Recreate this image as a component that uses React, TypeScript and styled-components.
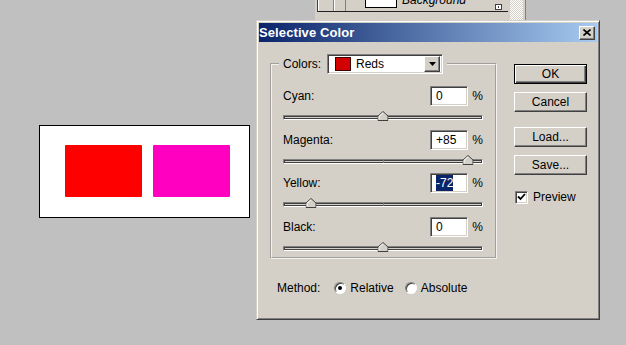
import React from "react";
import styled, { createGlobalStyle } from "styled-components";

const GlobalStyle = createGlobalStyle`
  * {
    margin: 0;
    padding: 0;
    box-sizing: border-box;
  }

  body {
    background: #c0c0c0;
    font-family: "Liberation Sans", Arial, sans-serif;
    font-size: 12px;
    color: #000;
    overflow: hidden;
  }
`;

const Desktop = styled.div`
  position: relative;
  width: 626px;
  height: 345px;
  overflow: hidden;
`;

/* ---------- layers palette peeking from the top ---------- */

const LayersPanel = styled.div`
  position: absolute;
  left: 315px;
  top: -14px;
  width: 211px;
  height: 35px;
  background: #d4d0c8;
  border-right: 1px solid #808080;
  display: flex;
  align-items: flex-start;
  padding-left: 2px;
`;

const LayerList = styled.div`
  width: 191px;
  height: 26px;
  border-left: 1px solid #404040;
  border-bottom: 1px solid #202020;
  display: flex;
  align-items: stretch;
`;

const LayerCell = styled.div<{ $w: number }>`
  width: ${(p) => p.$w}px;
  border-right: 1px solid #808080;
  box-shadow: inset 1px 0 0 #fff;
  display: flex;
  align-items: flex-end;
  justify-content: center;
  padding-bottom: 15px;
`;

const LayerThumb = styled.div`
  width: 32px;
  height: 22px;
  margin-left: 19px;
  background: #fff;
  border: 1px solid #000;
`;

const LayerName = styled.span`
  margin-left: 5px;
  font-style: italic;
  font-size: 12px;
  line-height: 1;
  padding-top: 8px;
`;

const LayerLock = styled.div`
  margin-left: auto;
  margin-right: 6px;
  padding-top: 13px;
`;

const ScrollTrack = styled.div`
  margin-left: 2px;
  width: 13px;
  height: 35px;
  background: repeating-conic-gradient(#ffffff 0 25%, #d4d0c8 0 50%) 0 0 / 2px 2px;
`;

/* ---------- document window ---------- */

const DocCanvas = styled.div`
  position: absolute;
  left: 39px;
  top: 125px;
  width: 211px;
  height: 93px;
  background: #fff;
  border: 1px solid #000;
  display: flex;
  gap: 11px;
  padding: 19px 0 0 25px;
`;

const Swatch = styled.div<{ $color: string }>`
  width: 77px;
  height: 52px;
  background: ${(p) => p.$color};
  border-radius: 1px;
`;

/* ---------- dialog ---------- */

const Dialog = styled.div`
  position: absolute;
  left: 256px;
  top: 20px;
  width: 344px;
  height: 300px;
  background: #d4d0c8;
  border: 1px solid;
  border-color: #d4d0c8 #404040 #404040 #d4d0c8;
  box-shadow: inset 1px 1px 0 #fff, inset -1px -1px 0 #808080;
  padding: 2px;
  display: flex;
  flex-direction: column;
`;

const TitleBar = styled.div`
  height: 19px;
  background: linear-gradient(to right, #0a246a, #a6caf0);
  display: flex;
  align-items: center;
  justify-content: space-between;
  padding: 0 2px 0 0;
`;

const Title = styled.span`
  color: #fff;
  font-weight: bold;
  font-size: 13px;
  letter-spacing: 0.1px;
`;

const Raised = styled.div`
  background: #d4d0c8;
  border: 1px solid;
  border-color: #fff #404040 #404040 #fff;
  box-shadow: inset -1px -1px 0 #808080;
`;

const CloseButton = styled(Raised)`
  width: 16px;
  height: 14px;
  display: flex;
  align-items: center;
  justify-content: center;
`;

const DialogBody = styled.div`
  display: flex;
  padding: 12px 0 0 11px;
`;

const LeftColumn = styled.div`
  width: 227px;
  display: flex;
  flex-direction: column;
`;

const Group = styled.fieldset`
  border: 2px groove #f4f2ee;
  padding: 12px 12px 1px 11px;
  display: flex;
  flex-direction: column;
  gap: 4.67px;
`;

const Legend = styled.legend`
  margin-left: -4px;
  padding: 0 4px;
`;

const LegendInner = styled.div`
  display: flex;
  align-items: center;
  gap: 6px;
  height: 20px;
`;

const Sunken = styled.div`
  background: #fff;
  border: 1px solid;
  border-color: #808080 #fff #fff #808080;
  box-shadow: inset 1px 1px 0 #404040, inset -1px -1px 0 #d4d0c8;
`;

const Select = styled(Sunken)`
  width: 116px;
  height: 20px;
  display: flex;
  align-items: center;
  padding: 0 2px 0 7px;
`;

const ColorChip = styled.div`
  width: 16px;
  height: 14px;
  background: #d20000;
  border: 1px solid #3a0000;
`;

const SelectText = styled.span`
  margin-left: 5px;
  flex: 1;
`;

const ArrowButton = styled(Raised)`
  width: 16px;
  height: 16px;
  display: flex;
  align-items: center;
  justify-content: center;
`;

const Block = styled.div`
  display: flex;
  flex-direction: column;
`;

const Row = styled.div`
  display: flex;
  align-items: center;
  height: 20px;
`;

const FieldLabel = styled.span`
  flex: 1;
`;

const ValueBox = styled(Sunken)`
  width: 38px;
  height: 20px;
  display: flex;
  align-items: center;
  padding-left: 5px;
`;

const Selected = styled.span`
  background: #0a246a;
  color: #fff;
  padding: 1px 0;
`;

const Unit = styled.span`
  width: 11px;
  margin-left: 4px;
  text-align: right;
`;

const SliderWrap = styled.div`
  position: relative;
  height: 14px;
  margin-top: 5px;
`;

const Track = styled.div`
  position: absolute;
  left: 0;
  right: 0;
  top: 4px;
  height: 5px;
  border: 1px solid;
  border-color: #808080 #fff #fff #808080;
  box-shadow: inset 1px 1px 0 #404040, inset -1px -1px 0 #404040;
  background: #d4d0c8;
`;

const Tick = styled.div`
  position: absolute;
  left: 50%;
  top: 0;
  bottom: 0;
  width: 1px;
  background: #808080;
`;

const Thumb = styled.div`
  position: absolute;
  top: 0;
  transform: translateX(-50%);
  display: flex;
`;

const MethodRow = styled.div`
  display: flex;
  align-items: center;
  height: 20px;
  margin-top: 19px;
  padding-left: 7px;
`;

const MethodLabel = styled.span`
  margin-right: 14px;
`;

const RadioItem = styled.label`
  display: flex;
  align-items: center;
  gap: 4px;
  margin-right: 11px;
`;

const RadioCircle = styled.span<{ $on: boolean }>`
  width: 12px;
  height: 12px;
  border-radius: 50%;
  background: #fff;
  border: 1px solid;
  border-color: #808080 #fff #fff #808080;
  box-shadow: inset 1px 1px 0 #404040;
  display: flex;
  align-items: center;
  justify-content: center;

  &::after {
    content: "";
    width: 4px;
    height: 4px;
    border-radius: 50%;
    background: ${(p) => (p.$on ? "#000" : "transparent")};
  }
`;

const RightColumn = styled.div`
  margin-left: 17px;
  padding-top: 10px;
  width: 73px;
  display: flex;
  flex-direction: column;
`;

const Button = styled.button<{ $default?: boolean; $gap: number }>`
  width: 73px;
  height: 20px;
  margin-top: ${(p) => p.$gap}px;
  font: inherit;
  background: #d4d0c8;
  border: 1px solid;
  border-color: ${(p) => (p.$default ? "#000" : "#fff #404040 #404040 #fff")};
  box-shadow: ${(p) =>
    p.$default
      ? "inset 1px 1px 0 #fff, inset -1px -1px 0 #404040, inset -2px -2px 0 #808080"
      : "inset -1px -1px 0 #808080"};
  color: #000;
`;

const CheckRow = styled.label`
  display: flex;
  align-items: center;
  gap: 5px;
  margin-top: 15px;
  padding-left: 1px;
`;

const CheckBox = styled(Sunken)`
  width: 13px;
  height: 13px;
  display: flex;
  align-items: center;
  justify-content: center;
`;

const channels = [
  { name: "Cyan:", value: 0, text: "0" },
  { name: "Magenta:", value: 85, text: "+85" },
  { name: "Yellow:", value: -72, text: "-72", selected: true },
  { name: "Black:", value: 0, text: "0" },
];

function ThumbIcon() {
  return (
    <svg width="11" height="10" viewBox="0 0 11 10">
      <polygon points="5.5,0.5 10.5,5 10.5,9.5 0.5,9.5 0.5,5" fill="#d4d0c8" stroke="#404040" />
      <polyline points="1.5,8.5 1.5,5.4 5.5,1.8" fill="none" stroke="#fff" />
    </svg>
  );
}

export default function App() {
  return (
    <Desktop>
      <GlobalStyle />

      <LayersPanel>
        <LayerList>
          <LayerCell $w={16}>
            <svg width="12" height="6" viewBox="0 0 12 6">
              <path d="M0 0 Q6 7 12 0 Z" fill="#202020" />
            </svg>
          </LayerCell>
          <LayerCell $w={12} />
          <LayerThumb />
          <LayerName>Background</LayerName>
          <LayerLock>
            <svg width="7" height="6" viewBox="0 0 7 6">
              <rect x="0.5" y="0.5" width="6" height="5" fill="#fff" stroke="#404040" />
              <rect x="3" y="2" width="1" height="2" fill="#404040" />
            </svg>
          </LayerLock>
        </LayerList>
        <ScrollTrack />
      </LayersPanel>

      <DocCanvas>
        <Swatch $color="#ff0000" />
        <Swatch $color="#ff00c0" />
      </DocCanvas>

      <Dialog>
        <TitleBar>
          <Title>Selective Color</Title>
          <CloseButton>
            <svg width="8" height="7" viewBox="0 0 8 7">
              <path d="M0.5 0.5 L7.5 6.5 M7.5 0.5 L0.5 6.5" stroke="#000" strokeWidth="1.6" />
            </svg>
          </CloseButton>
        </TitleBar>

        <DialogBody>
          <LeftColumn>
            <Group>
              <Legend>
                <LegendInner>
                  <span>Colors:</span>
                  <Select>
                    <ColorChip />
                    <SelectText>Reds</SelectText>
                    <ArrowButton>
                      <svg width="7" height="4" viewBox="0 0 7 4">
                        <polygon points="0,0 7,0 3.5,4" fill="#000" />
                      </svg>
                    </ArrowButton>
                  </Select>
                </LegendInner>
              </Legend>

              {channels.map((c) => (
                <Block key={c.name}>
                  <Row>
                    <FieldLabel>{c.name}</FieldLabel>
                    <ValueBox>{c.selected ? <Selected>{c.text}</Selected> : c.text}</ValueBox>
                    <Unit>%</Unit>
                  </Row>
                  <SliderWrap>
                    <Track>
                      <Tick />
                    </Track>
                    <Thumb style={{ left: `${((c.value + 100) / 200) * 100}%` }}>
                      <ThumbIcon />
                    </Thumb>
                  </SliderWrap>
                </Block>
              ))}
            </Group>

            <MethodRow>
              <MethodLabel>Method:</MethodLabel>
              <RadioItem>
                <RadioCircle $on />
                Relative
              </RadioItem>
              <RadioItem>
                <RadioCircle $on={false} />
                Absolute
              </RadioItem>
            </MethodRow>
          </LeftColumn>

          <RightColumn>
            <Button $default $gap={0}>OK</Button>
            <Button $gap={8}>Cancel</Button>
            <Button $gap={15}>Load...</Button>
            <Button $gap={8}>Save...</Button>
            <CheckRow>
              <CheckBox>
                <svg width="9" height="8" viewBox="0 0 9 8">
                  <path d="M1 3.5 L3.5 6 L8 1" fill="none" stroke="#000" strokeWidth="1.8" />
                </svg>
              </CheckBox>
              Preview
            </CheckRow>
          </RightColumn>
        </DialogBody>
      </Dialog>
    </Desktop>
  );
}
